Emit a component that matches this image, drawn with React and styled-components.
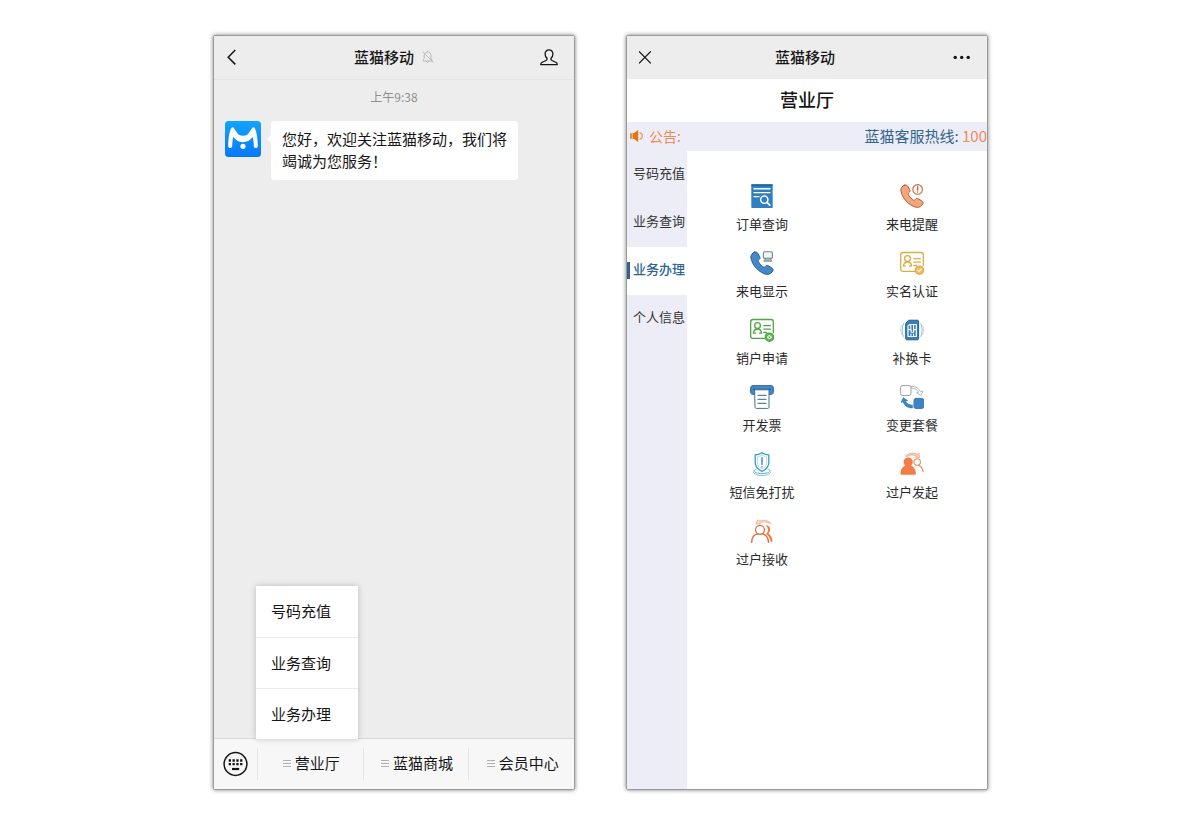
import React from "react";
import styled, { createGlobalStyle } from "styled-components";

const GlobalStyle = createGlobalStyle`
  *, *::before, *::after { box-sizing: border-box; }
  body {
    margin: 0;
    background: #fff;
    color: #161616;
    font-family: "Noto Sans CJK SC", "Noto Sans", sans-serif;
    font-size: 15px;
  }
  button {
    border: 0;
    margin: 0;
    padding: 0;
    background: none;
    color: inherit;
    font: inherit;
    cursor: pointer;
  }
  a { color: inherit; text-decoration: none; }
  svg { display: block; flex: none; }
`;

const Stage = styled.main`
  display: grid;
  grid-template-columns: repeat(auto-fit, minmax(320px, 1fr));
  gap: 51px;
  max-width: 776px;
  min-height: 100vh;
  margin: 0 auto;
  padding: 35px 0 35px 1px;
`;

const Phone = styled.section`
  display: flex;
  flex-direction: column;
  min-width: 0;
  background: ${(p) => p.$bg};
  border: 1px solid #9a9a9a;
  border-radius: 2px;
  box-shadow: 0 0 4px rgba(0, 0, 0, 0.5);
`;

const TopBar = styled.header`
  display: flex;
  align-items: center;
  height: ${(p) => (p.$lined ? 44 : 43)}px;
  padding: 0 16px 0 12px;
  background: #ededed;
  border-bottom: ${(p) => (p.$lined ? "1px solid #e4e4e4" : "0")};
`;

const TopTitle = styled.h1`
  display: flex;
  flex: 1;
  align-items: center;
  justify-content: center;
  gap: 8px;
  margin: 0;
  padding-bottom: 2px;
  font-size: 15px;
  font-weight: 500;
  line-height: 22px;
`;

const Chat = styled.div`
  flex: 1;
  padding: 0 11px;
`;

const Time = styled.time`
  display: block;
  padding: 8px 0 15px;
  color: #8f8f8f;
  font-size: 12px;
  line-height: 18px;
  text-align: center;
`;

const Message = styled.div`
  display: flex;
  align-items: flex-start;
  gap: 10px;
`;

const Bubble = styled.p`
  position: relative;
  max-width: 247px;
  margin: 0;
  padding: 7px 11px 8px;
  background: #fff;
  border-radius: 3px;
  line-height: 22px;

  &::before {
    content: "";
    position: absolute;
    top: 13px;
    left: -4px;
    border: 5px solid transparent;
    border-left: 0;
    border-right-color: #fff;
  }
`;

const BottomBar = styled.nav`
  display: flex;
  align-items: center;
  height: 51px;
  background: #f7f7f7;
  border-top: 1px solid #d6d6d6;
`;

const KeyboardButton = styled.button`
  padding: 0 9px;
`;

const Tab = styled.div`
  position: relative;
  flex: 1;
  border-left: 1px solid #e6e6e6;
`;

const TabButton = styled.button`
  display: flex;
  align-items: center;
  justify-content: center;
  gap: 4px;
  width: 100%;
  height: 32px;
  padding: 0 0 3px 2px;
`;

const Popup = styled.div`
  position: absolute;
  bottom: 41px;
  left: -2px;
  width: 102px;
  background: #fff;
  box-shadow: 0 0 6px rgba(0, 0, 0, 0.22);
`;

const PopupItem = styled.button`
  display: block;
  width: 100%;
  height: 51px;
  padding: 0 15px 2px;
  text-align: left;

  & + & { border-top: 1px solid #ebebeb; }
`;

const PageTitle = styled.h2`
  margin: 0;
  padding-bottom: 3px;
  font-size: 18px;
  font-weight: 500;
  line-height: 40px;
  text-align: center;
`;

const Notice = styled.div`
  display: flex;
  align-items: center;
  height: 29px;
  padding: 0 0 2px 3px;
  overflow: hidden;
  background: #ededf7;
  color: #f08a5a;
  white-space: nowrap;
`;

const NoticeLabel = styled.span`
  padding-left: 5px;
  font-size: 14px;
`;

const Hotline = styled.span`
  margin-left: auto;
  color: #32648c;
`;

const HotlineNumber = styled.span`
  color: #f08a5a;
`;

const Body = styled.div`
  display: flex;
  flex: 1;
`;

const Side = styled.nav`
  flex: 0 0 60px;
  background: #ededf7;
`;

const SideItem = styled.button`
  position: relative;
  display: block;
  width: 100%;
  height: 48px;
  padding: 0 0 5px 4px;
  background: ${(p) => (p.$active ? "#fff" : "transparent")};
  color: ${(p) => (p.$active ? "#2c6492" : "#333")};
  font-size: 13px;
  font-weight: ${(p) => (p.$active ? 500 : 400)};
  text-align: center;
  white-space: nowrap;

  &::before {
    content: "";
    position: absolute;
    top: 15px;
    left: 0;
    width: 3px;
    height: 17px;
    background: ${(p) => (p.$active ? "#2f628f" : "transparent")};
  }
`;

const Services = styled.div`
  display: grid;
  flex: 1;
  grid-template-columns: 1fr 1fr;
  grid-auto-rows: 67px;
  align-content: start;
  padding-top: 33px;
`;

const Service = styled.a`
  display: flex;
  flex-direction: column;
  align-items: center;
  gap: 6px;
  color: #2b2b2b;
  font-size: 13px;
  line-height: 20px;
`;

const Ico = ({ children, size = 24, ...rest }) => (
  <svg width={size} height={size} viewBox="0 0 24 24" fill="none" strokeLinecap="round" strokeLinejoin="round" aria-hidden="true" {...rest}>
    {children}
  </svg>
);

const HANDSET =
  "M4.300 1.200C2.200 2 .8 4.200.8 6.300 1.600 14 10 22.800 17.200 23.400c2.400 0 4.600-1.500 5.800-3.900.4-1-.1-1.800-.9-2.300l-3.700-2.400c-1.200-.7-2.200-.4-3 .6-.7 1-1.700 1-2.700.2-1.900-1.400-3.300-3-4.300-4.800-.4-.9-.2-1.600.6-2.200 1.100-.8 1.300-1.800.7-2.900L7.700 2.200C7 1 5.600.7 4.300 1.200z";

const OrderIcon = () => (
  <Ico>
    <rect x="1.300" y=".3" width="21.400" height="23.700" rx=".8" fill="#2f80bf" />
    <path d="M1.300 1.200h21.400" stroke="#1c629e" strokeWidth="1.600" strokeLinecap="butt" />
    <path d="M4 4.700h16M4 8.600h16M4 12.600h5" stroke="#fff" strokeWidth="1.400" />
    <circle cx="14.300" cy="15.700" r="3.600" stroke="#fff" strokeWidth="1.500" />
    <path d="M17 18.400l2.800 2.800" stroke="#fff" strokeWidth="1.800" />
  </Ico>
);

const CallShowIcon = () => (
  <Ico>
    <path d={HANDSET} fill="#4389c8" stroke="#2b5f92" />
    <rect x="13.400" y=".8" width="9" height="6.600" rx="1.200" fill="#eef4f6" stroke="#71858d" strokeWidth="1.100" />
    <path d="M15.500 7.600l-1.600 2.600h8l-1.600-2.600" fill="#a9bac0" stroke="#71858d" strokeWidth=".9" />
  </Ico>
);

const CallAlertIcon = () => (
  <Ico>
    <path d={HANDSET} fill="#f4a57d" stroke="#b65f34" />
    <circle cx="17.600" cy="5.400" r="4.800" fill="#fffaf5" stroke="#bb7044" strokeWidth="1.100" />
    <path d="M17.600 2.700v3.300M17.600 8v.1" stroke="#c86532" strokeWidth="1.400" />
  </Ico>
);

const IdCard = ({ color, soft, children }) => (
  <Ico stroke={color} strokeWidth="1.300">
    <path d="M14.500 20.300H2.900a2.200 2.200 0 0 1-2.200-2.200V3.700c0-1.200 1-2.200 2.200-2.200h18.200c1.200 0 2.200 1 2.200 2.200v11" />
    <circle cx="7.500" cy="7.600" r="2.900" />
    <path d="M3.400 15.200c.2-2.600 1.600-4.200 4.100-4.200s3.900 1.600 4.100 4.200M3.400 15.200h2M9.600 15.200h2" />
    <path d="M13.800 7.600h6.600M13.800 11.100h6.600M13.800 14.500h2.800" />
    <circle cx="19.400" cy="19.200" r="4.100" fill={soft} />
    {children}
  </Ico>
);

const VerifyIcon = () => (
  <IdCard color="#d9ae48" soft="#f5bd61">
    <path d="M17.600 19.200l1.400 1.300 2.400-2.500" stroke="#fff3d8" strokeWidth="1.100" />
  </IdCard>
);

const CloseAccountIcon = () => (
  <IdCard color="#51a548" soft="#64b359">
    <circle cx="19.400" cy="19.200" r="1.700" fill="#dff3da" stroke="#e4f5e0" strokeWidth="1" />
    <path d="M18.900 18.700l1 1M19.900 18.700l-1 1" stroke="#4a9c42" strokeWidth=".8" />
  </IdCard>
);

const SimIcon = () => (
  <Ico>
    <path d="M9.200 2.200h8.200c.7 0 1.200.5 1.200 1.200v17.200c0 .7-.5 1.200-1.200 1.200H6.900c-.7 0-1.200-.5-1.200-1.200V5.700z" fill="#347fbd" stroke="#245f96" strokeWidth="1" />
    <path d="M9.700 6.500h6.600v12H8V8.200z" stroke="#fff" strokeWidth="1.200" />
    <path d="M10.800 6.800v4M13.600 6.800v4M8.300 11.600h2.900v2.600h2.400v-2.600h2.400M10.900 18v-2M13.600 18v-2" stroke="#fff" strokeWidth="1.100" />
    <path d="M3.400 5.600c-1.800 4-1.800 8.800 0 12.800M20.900 5.600c1.800 4 1.800 8.800 0 12.800" stroke="#86b3d3" strokeWidth=".9" />
    <path d="M1.500 7.400c-1.200 3-1.200 6.200 0 9.200M22.700 7.400c1.200 3 1.200 6.200 0 9.200" stroke="#bdd5e4" strokeWidth=".8" />
  </Ico>
);

const InvoiceIcon = () => (
  <Ico>
    <rect x=".6" y=".6" width="22.800" height="8.800" rx="2.300" fill="#4389c8" stroke="#2f6da5" />
    <path d="M3.600 4.400h16.800" stroke="#24598a" strokeWidth="1.300" />
    <path d="M5 4.800h14v17.400c0 .7-.5 1.200-1.200 1.200H6.200c-.7 0-1.200-.5-1.200-1.200z" fill="#fff" stroke="#417394" />
    <path d="M8 10.300h8M8 14.300h8M8 18.300h8" stroke="#5d8498" strokeWidth="1.300" />
  </Ico>
);

const ChangePlanIcon = () => (
  <Ico>
    <rect x=".6" y=".6" width="10.400" height="9.800" rx="1.900" stroke="#9a9fa3" />
    <rect x="14" y="13.400" width="9.700" height="10" rx="1.900" fill="#3e86c3" stroke="#3478b2" />
    <path d="M11.800 1.400c4.400 0 7.500 2 8.600 5.300l2.600-.7-2.200 4.500-4.200-2.700 2-.4c-1-2.700-3.300-4.100-6.800-4.200z" stroke="#a8b3b9" strokeWidth=".9" />
    <path d="M12.300 23c-4.800-.1-8.200-2.700-9.100-6.300l-2.100.6 2.200-4.600 4.300 2.900-2.100.5c1 2.500 3.200 3.900 6.800 4.100z" fill="#3e86c3" stroke="#3478b2" strokeWidth=".7" />
  </Ico>
);

const ShieldIcon = () => (
  <Ico>
    <path d="M12 .7c2 1.500 4.300 2.200 6.800 2.200v7.600c0 4-2.500 7-6.800 8.900-4.300-1.900-6.800-4.900-6.800-8.900V2.900C7.700 2.900 10 2.200 12 .7z" fill="#fff" stroke="#389cc9" strokeWidth="1.300" />
    <path d="M12 3.200c1.400.9 2.900 1.500 4.600 1.600v5.700c0 2.900-1.600 5-4.600 6.500-3-1.500-4.600-3.600-4.600-6.500V4.800c1.700-.1 3.200-.7 4.600-1.600z" stroke="#a2d3e7" strokeWidth=".8" />
    <path d="M12 5.800v6.600M12 14.800v.1" stroke="#2f8abe" strokeWidth="1.400" />
    <path d="M5.800 17.400c-1.100.4-1.800.9-1.800 1.500 0 1.500 3.600 2.600 8 2.600s8-1.100 8-2.600c0-.6-.7-1.100-1.800-1.500" stroke="#57add1" strokeWidth="1" />
    <path d="M3.300 20.300c.6 1.900 4.300 3.200 8.700 3.200s8.100-1.300 8.700-3.200" stroke="#74bedb" strokeWidth="1" />
  </Ico>
);

const TransferOutIcon = () => (
  <Ico>
    <path d="M6 3.800C8.700.8 14.500.2 17.700 2.600l1.400-1.300.3 4.200-4.100-.3 1.300-1.300c-2.700-1.400-6.300-1.400-9.500.6z" fill="#fbd5c1" stroke="#e59a78" strokeWidth=".7" />
    <circle cx="17.200" cy="10" r="3.200" stroke="#e98b62" strokeWidth="1.100" />
    <path d="M18.300 13.300c2.700 1 4.400 3.200 4.800 6.300" stroke="#e98b62" strokeWidth="1.200" />
    <circle cx="8.200" cy="10" r="4.600" fill="#f27d46" />
    <path d="M.5 21.900c0-5 2.400-7.800 5.300-8.500h4.800c3 .7 5.300 3.500 5.300 8.500 0 .5-.3.800-.8.800H1.300c-.5 0-.8-.3-.8-.8z" fill="#f27d46" />
  </Ico>
);

const TransferInIcon = () => (
  <Ico>
    <path d="M20.500 3.900C17.400.9 12.300.5 9.200 2.100L8.100.7 5.700 4.700l4.600.5-.8-1.300c3.200-1.300 7-1.500 11 .7z" fill="#fbdfd0" stroke="#e4a083" strokeWidth=".7" />
    <path d="M15.500 6.300c4.700-.2 6.300 5 2.900 8.100 2.700 1.600 4.100 4.400 4.100 8.300h-2c-.3-3.500-1.700-6-4.400-7.500 2.700-2.700 2.500-6.300-.6-8.900z" fill="#f07d45" />
    <circle cx="10" cy="10.800" r="4.500" stroke="#e36f3e" strokeWidth="1.300" />
    <path d="M1.600 23.400c.2-5 2.600-7.900 6-8.500M12.500 14.900c3.500.7 5.800 3.500 6 8.500" stroke="#e36f3e" strokeWidth="1.400" />
  </Ico>
);

const BackIcon = () => (
  <svg width="22" height="18" viewBox="0 0 22 18" fill="none" aria-hidden="true">
    <path d="M9.300 1L2.200 8.200l7.100 7.200" stroke="#151515" strokeWidth="1.500" />
  </svg>
);

const CloseIcon = () => (
  <svg width="18" height="14" viewBox="0 0 18 14" fill="none" aria-hidden="true">
    <path d="M0 .4l11.800 12M11.800.4L0 12.400" stroke="#151515" strokeWidth="1.300" />
  </svg>
);

const DotsIcon = () => (
  <svg width="18" height="6" viewBox="0 0 18 6" fill="#111" aria-hidden="true">
    <circle cx="2.200" cy="2.400" r="1.700" />
    <circle cx="8.700" cy="2.400" r="1.700" />
    <circle cx="15.200" cy="2.400" r="1.700" />
  </svg>
);

const PersonIcon = () => (
  <svg width="18" height="18" viewBox="0 0 18 18" fill="none" stroke="#151515" strokeWidth="1.300" strokeLinejoin="round" aria-hidden="true">
    <path d="M9 .9c-2.300 0-3.900 1.700-3.900 4 0 1.900.8 3.400 1.900 4.400.2 1-.1 1.700-1 2.200l-4.200 2c-.7.4-1 .9-1 1.600v.6h16.400v-.6c0-.7-.3-1.200-1-1.600l-4.200-2c-.9-.5-1.200-1.200-1-2.200 1.100-1 1.900-2.500 1.900-4.400 0-2.300-1.600-4-3.900-4z" />
  </svg>
);

const MutedBellIcon = () => (
  <svg width="12" height="14" viewBox="0 0 12 14" fill="none" stroke="#b4b4b4" strokeWidth=".9" strokeLinejoin="round" aria-hidden="true">
    <path d="M1.200 11V10l1-1.200V5.600C2.200 3.400 3.500 2 5.600 2S9 3.400 9 5.600v3.200l1 1.200v1zM4.300 11c.1.900.6 1.300 1.300 1.300s1.200-.4 1.300-1.300M5.600 2V.8M.7 1.700l10.600 10.600" />
  </svg>
);

const KeyboardIcon = () => (
  <svg width="25" height="26" viewBox="0 0 25 26" fill="none" aria-hidden="true">
    <circle cx="12.500" cy="13" r="11.400" stroke="#151515" strokeWidth="1.500" />
    <path d="M5.700 9.500h14M5.700 13.200h14" stroke="#151515" strokeWidth="2.300" strokeDasharray="2.300 1.500" />
    <path d="M9 18h7.200" stroke="#151515" strokeWidth="2.200" />
  </svg>
);

const LinesIcon = () => (
  <svg width="8" height="8" viewBox="0 0 8 8" stroke="#b0b0b0" aria-hidden="true">
    <path d="M0 1.500h8M0 4.500h8M0 7.500h8" />
  </svg>
);

const SpeakerIcon = () => (
  <svg width="14" height="12" viewBox="0 0 14 12" fill="none" aria-hidden="true">
    <path d="M.2 3.200h1.600v5.600H.2zM2.500 3.100h1.600L8.200.1v11.800L4.100 8.900H2.500z" fill="#df7614" />
    <path d="M9.600 2.600c3.800 1.200 3.800 5.600 0 6.800" stroke="#e89a52" strokeWidth="1.200" />
  </svg>
);

const Avatar = () => (
  <svg width="36" height="36" viewBox="0 0 36 36" role="img" aria-label="蓝猫移动">
    <defs>
      <linearGradient id="avatarSky" x1="0" y1="0" x2="0" y2="1">
        <stop offset="0" stopColor="#12a4fb" />
        <stop offset="1" stopColor="#0878f8" />
      </linearGradient>
    </defs>
    <rect width="36" height="36" rx="3.500" fill="url(#avatarSky)" />
    <path
      d="M3.200 25.200C3.400 16 4.500 10 6.600 6.800c.5-.7 1.400-.7 2-.1l4.500 6.600c3.200 2 6.600 2 9.800 0l4.500-6.600c.6-.6 1.500-.6 2 .1 2.100 3.200 3.200 9.200 3.400 18.400 0 2.400-3.900 2.400-4 0-.1-3.600-.4-6.500-1-9.200l-2.500 2.500c-4.300 3.600-10.300 3.600-14.600 0L8.200 16c-.6 2.700-.9 5.600-1 9.200-.1 2.400-4 2.400-4 0z"
      fill="#fff"
    />
    <circle cx="18" cy="25.300" r="2.600" fill="#fff" />
  </svg>
);

const popupItems = ["号码充值", "业务查询", "业务办理"];
const tabs = ["营业厅", "蓝猫商城", "会员中心"];
const sideItems = ["号码充值", "业务查询", "业务办理", "个人信息"];
const services = [
  ["订单查询", OrderIcon],
  ["来电提醒", CallAlertIcon],
  ["来电显示", CallShowIcon],
  ["实名认证", VerifyIcon],
  ["销户申请", CloseAccountIcon],
  ["补换卡", SimIcon],
  ["开发票", InvoiceIcon],
  ["变更套餐", ChangePlanIcon],
  ["短信免打扰", ShieldIcon],
  ["过户发起", TransferOutIcon],
  ["过户接收", TransferInIcon],
];

const ChatPhone = () => (
  <Phone $bg="#ededed">
    <TopBar $lined>
      <button type="button" aria-label="返回"><BackIcon /></button>
      <TopTitle>蓝猫移动<MutedBellIcon /></TopTitle>
      <button type="button" aria-label="个人资料"><PersonIcon /></button>
    </TopBar>
    <Chat>
      <Time>上午9:38</Time>
      <Message>
        <Avatar />
        <Bubble>您好，欢迎关注蓝猫移动，我们将竭诚为您服务！</Bubble>
      </Message>
    </Chat>
    <BottomBar>
      <KeyboardButton type="button" aria-label="键盘"><KeyboardIcon /></KeyboardButton>
      {tabs.map((label, i) => (
        <Tab key={label}>
          <TabButton type="button"><LinesIcon />{label}</TabButton>
          {i === 0 && (
            <Popup>
              {popupItems.map((item) => (
                <PopupItem type="button" key={item}>{item}</PopupItem>
              ))}
            </Popup>
          )}
        </Tab>
      ))}
    </BottomBar>
  </Phone>
);

const HallPhone = () => (
  <Phone $bg="#fff">
    <TopBar>
      <button type="button" aria-label="关闭"><CloseIcon /></button>
      <TopTitle>蓝猫移动</TopTitle>
      <button type="button" aria-label="更多"><DotsIcon /></button>
    </TopBar>
    <PageTitle>营业厅</PageTitle>
    <Notice>
      <SpeakerIcon />
      <NoticeLabel>公告:</NoticeLabel>
      <Hotline>蓝猫客服热线: <HotlineNumber>100</HotlineNumber></Hotline>
    </Notice>
    <Body>
      <Side>
        {sideItems.map((label) => (
          <SideItem type="button" key={label} $active={label === "业务办理"}>{label}</SideItem>
        ))}
      </Side>
      <Services>
        {services.map(([label, Icon]) => (
          <Service href="#" key={label}><Icon />{label}</Service>
        ))}
      </Services>
    </Body>
  </Phone>
);

export default function App() {
  return (
    <>
      <GlobalStyle />
      <Stage>
        <ChatPhone />
        <HallPhone />
      </Stage>
    </>
  );
}
